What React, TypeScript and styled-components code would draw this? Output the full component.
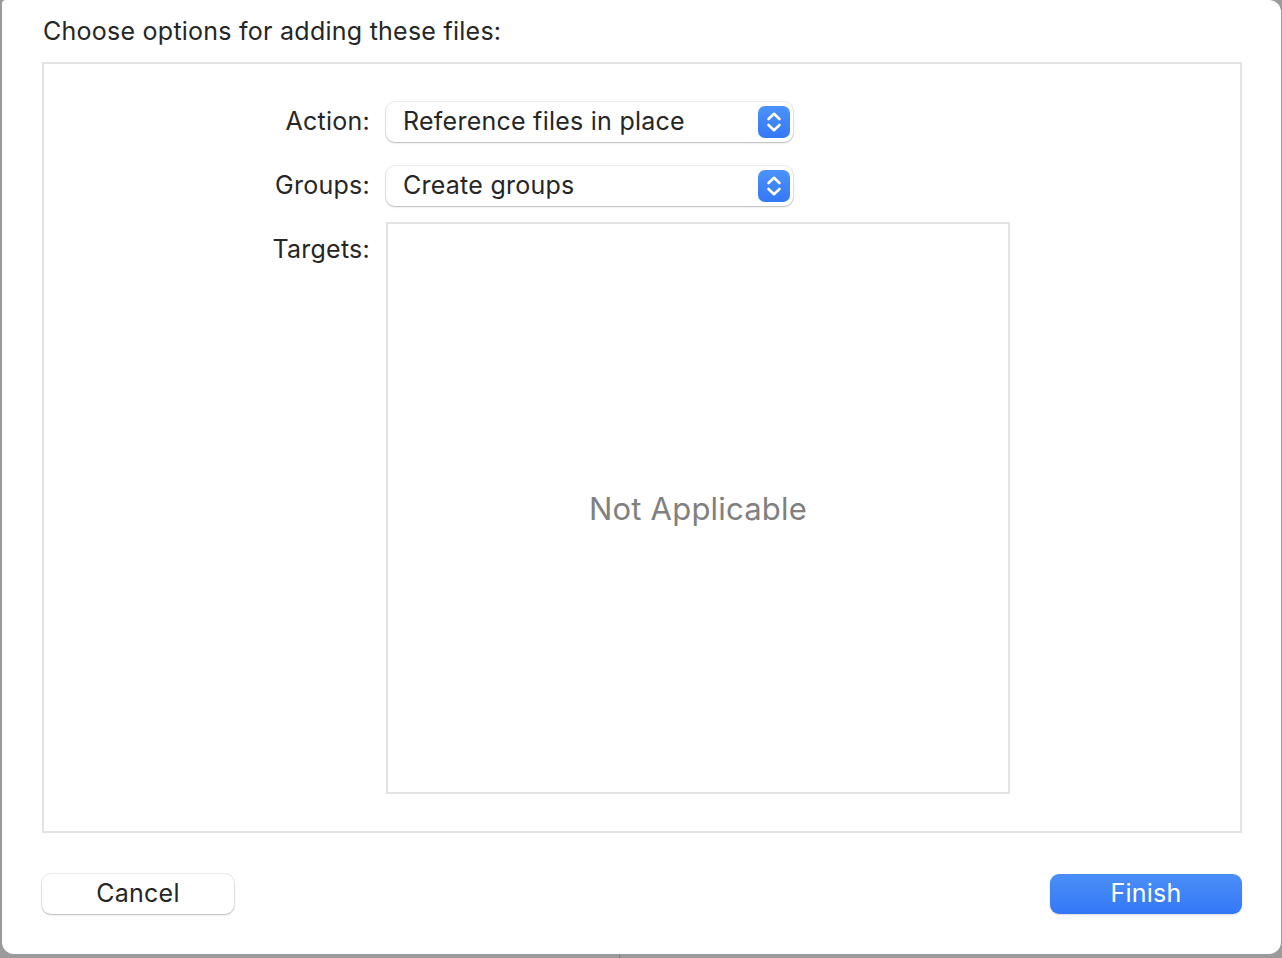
import React from "react";
import styled, { createGlobalStyle } from "styled-components";

const Global = createGlobalStyle`
  html, body { margin: 0; padding: 0; }
  body {
    width: 1282px;
    height: 958px;
    overflow: hidden;
    background: linear-gradient(to right, #9b9b9b 0, #9b9b9b 619px, #7f7f7f 619px, #7f7f7f 620px, #9b9b9b 620px);
    font-family: Inter, "Noto Sans", "Liberation Sans", sans-serif;
    -webkit-font-smoothing: antialiased;
  }
`;

const Page = styled.div`
  display: flex;
  padding-left: 2px;
`;

const Dialog = styled.div`
  width: 1279px;
  height: 954px;
  box-sizing: border-box;
  background: #ffffff;
  border-radius: 4px 12px 12px 12px;
  padding: 15px 39px 0 40px;
  display: flex;
  flex-direction: column;
  color: #262626;
`;

const Title = styled.div`
  font-size: 25px;
  line-height: 32px;
  padding-left: 1px;
  height: 32px;
  margin-bottom: 15px;
  letter-spacing: 0.25px;
`;

const OptionsBox = styled.div`
  height: 771px;
  box-sizing: border-box;
  border: 2px solid #e3e3e3;
  padding: 38px 0;
  display: grid;
  grid-template-columns: 326px auto;
  grid-template-rows: 40px 40px 1fr;
  column-gap: 16px;
  row-gap: 24px;
  align-content: start;
`;

const Label = styled.div<{ $top?: boolean }>`
  font-size: 25px;
  letter-spacing: 0.25px;
  line-height: 30px;
  text-align: right;
  align-self: ${(p) => (p.$top ? "start" : "center")};
  padding-top: ${(p) => (p.$top ? "4px" : "0")};
  margin-top: ${(p) => (p.$top ? "0" : "-2px")};
  color: #262626;
`;

const Popup = styled.div`
  width: 407px;
  height: 40px;
  box-sizing: border-box;
  background: #fff;
  border-radius: 9px;
  box-shadow: 0 0 0 1px rgba(0, 0, 0, 0.07), 0 1px 2px rgba(0, 0, 0, 0.22);
  display: flex;
  align-items: center;
  justify-content: space-between;
  padding: 0 3px 0 17px;
  font-size: 25px;
  letter-spacing: 0.25px;
  color: #262626;
`;

const PopupText = styled.span`
  margin-top: -2px;
`;

const Stepper = styled.div`
  width: 32px;
  height: 32px;
  border-radius: 7px;
  background: linear-gradient(to bottom, #4c92f8, #3478f6);
  display: flex;
  align-items: center;
  justify-content: center;
`;

const TargetsList = styled.div`
  width: 624px;
  height: 572px;
  box-sizing: border-box;
  border: 2px solid #e3e3e3;
  margin-top: -8px;
  display: flex;
  align-items: center;
  justify-content: center;
  font-size: 31px;
  letter-spacing: 0.2px;
  color: #808080;
`;

const ButtonRow = styled.div`
  display: flex;
  justify-content: space-between;
  margin-top: 41px;
`;

const Button = styled.button<{ $primary?: boolean }>`
  width: 192px;
  height: 40px;
  border: none;
  border-radius: 9px;
  font-family: inherit;
  font-size: 25px;
  letter-spacing: 0.25px;
  cursor: default;
  padding: 0 0 2px 0;
  color: ${(p) => (p.$primary ? "#ffffff" : "#262626")};
  background: ${(p) =>
    p.$primary ? "linear-gradient(to bottom, #4a8ff7, #3477f6)" : "#ffffff"};
  box-shadow: ${(p) =>
    p.$primary
      ? "0 1px 2px rgba(0, 0, 0, 0.15)"
      : "0 0 0 1px rgba(0, 0, 0, 0.07), 0 1px 2px rgba(0, 0, 0, 0.22)"};
`;

const Chevrons = () => (
  <svg width="22" height="26" viewBox="0 0 22 26" fill="none">
    <path
      d="M5.5 10 L11 4.8 L16.5 10"
      stroke="#fff"
      strokeWidth="2.6"
      strokeLinecap="round"
      strokeLinejoin="round"
    />
    <path
      d="M5.5 16 L11 21.2 L16.5 16"
      stroke="#fff"
      strokeWidth="2.6"
      strokeLinecap="round"
      strokeLinejoin="round"
    />
  </svg>
);

const PopupButton = ({ value }: { value: string }) => (
  <Popup>
    <PopupText>{value}</PopupText>
    <Stepper>
      <Chevrons />
    </Stepper>
  </Popup>
);

export default function App() {
  return (
    <>
      <Global />
      <Page>
        <Dialog>
          <Title>Choose options for adding these files:</Title>
          <OptionsBox>
            <Label>Action:</Label>
            <PopupButton value="Reference files in place" />
            <Label>Groups:</Label>
            <PopupButton value="Create groups" />
            <Label $top>Targets:</Label>
            <TargetsList>Not Applicable</TargetsList>
          </OptionsBox>
          <ButtonRow>
            <Button>Cancel</Button>
            <Button $primary>Finish</Button>
          </ButtonRow>
        </Dialog>
      </Page>
    </>
  );
}
